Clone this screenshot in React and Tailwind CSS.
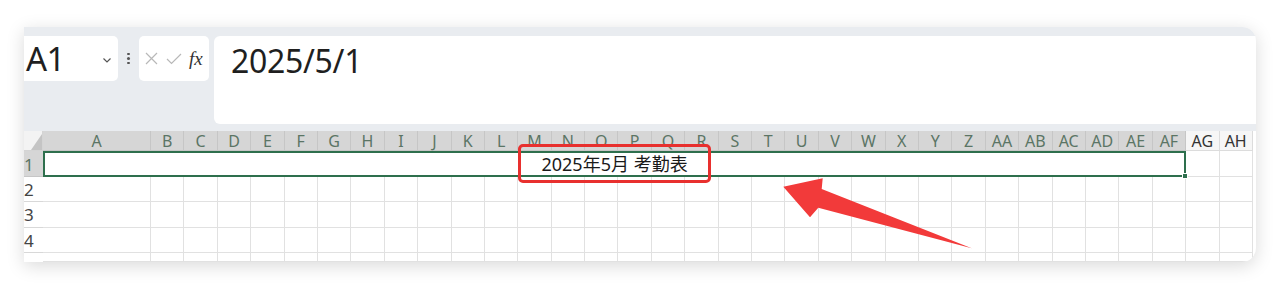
import React from "react";

const COLS = ["A","B","C","D","E","F","G","H","I","J","K","L","M","N","O","P","Q","R","S","T","U","V","W","X","Y","Z","AA","AB","AC","AD","AE","AF","AG","AH"];

export default function App() {
  return (
    <div className="relative w-[1280px] h-[286px] bg-white overflow-hidden" style={{ fontFamily: '"Noto Sans", "Noto Sans CJK SC", sans-serif' }}>
      <div className="pt-[27px] pl-[24px]">
        <div className="w-[1232px] h-[235px] bg-white rounded-r-[14px] shadow-[0_4px_18px_rgba(0,0,0,0.15)] overflow-hidden flex flex-col">
          {/* formula bar area */}
          <div className="h-[104px] shrink-0 bg-[#e9ecf0] pt-[9px] flex items-start">
            <div className="w-[94px] h-[45px] bg-white rounded-r-[5px] flex items-center justify-between pr-[5px]">
              <span className="text-[33px] leading-none text-[#1f1f1f] pl-[2px] tracking-[-0.5px]">A1</span>
              <svg width="12" height="12" viewBox="0 0 12 12" className="mt-[2px]"><path d="M2.5 4.5 L6 8 L9.5 4.5" fill="none" stroke="#555" strokeWidth="1.2" /></svg>
            </div>
            <div className="w-[21px] h-[45px] flex flex-col items-center justify-center gap-[2px]">
              <span className="w-[2.5px] h-[2.5px] rounded-full bg-[#555]" />
              <span className="w-[2.5px] h-[2.5px] rounded-full bg-[#555]" />
              <span className="w-[2.5px] h-[2.5px] rounded-full bg-[#555]" />
            </div>
            <div className="w-[70px] h-[45px] bg-white rounded-[5px] flex items-center pl-[6px] gap-[8px]">
              <svg width="13" height="13" viewBox="0 0 13 13"><path d="M1 1 L12 12 M12 1 L1 12" stroke="#b8b8b8" strokeWidth="1.2" /></svg>
              <svg width="16" height="12" viewBox="0 0 16 12"><path d="M1 6 L5.5 10.5 L15 1" fill="none" stroke="#b8b8b8" strokeWidth="1.2" /></svg>
              <span className="text-[19px] italic text-[#333] leading-none -ml-[1px]" style={{ fontFamily: '"Liberation Serif", serif' }}>fx</span>
            </div>
            <div className="ml-[5px] flex-1 h-[88px] bg-white rounded-l-[6px] pl-[17px] pt-[3px]">
              <span className="text-[32px] leading-[44px] text-[#1f1f1f] tracking-[-0.3px]">2025/5/1</span>
            </div>
          </div>
          {/* grid */}
          <div className="grid grid-cols-[19px_108px_repeat(33,33.4px)] grid-rows-[20px_26px_25px_26px_25px_9px]">
            {/* header row */}
            <div className="bg-[#f3f3f3] border-r border-b border-[#d4d4d4] flex items-end justify-end">
              <svg width="11" height="16" viewBox="0 0 11 16"><polygon points="11,0 11,16 0,16" fill="#c4c4c4" /></svg>
            </div>
            {COLS.map((c, i) => {
              const sel = i < 32;
              return (
                <div key={c} className={`${sel ? "bg-[#d6d6d6] text-[#5b7565]" : "bg-[#f6f6f6] text-[#333]"} border-r border-b ${sel ? "border-[#c6c6c6]" : "border-[#dcdcdc]"} flex items-center justify-center text-[16px] leading-none`}>
                  {c}
                </div>
              );
            })}
            {/* row 1 */}
            <div className="bg-[#d6d6d6] text-[#5b7565] text-[17px] leading-none flex items-center pt-[2px] border-b border-[#c6c6c6]">1</div>
            <div className="col-span-32 relative border-2 border-[#2e6f4d] bg-white flex items-center justify-center">
              <span className="text-[18px] text-[#1a1a1a] leading-none">2025年5月 考勤表</span>
              <span className="absolute -right-[4px] -bottom-[4px] w-[6px] h-[6px] bg-[#2e6f4d] border border-white" />
            </div>
            <div className="border-r border-b border-[#e1e1e1]" />
            <div className="border-r border-b border-[#e1e1e1]" />
            {/* rows 2-5 */}
            {[2, 3, 4, 5].map((r) => (
              <React.Fragment key={r}>
                <div className={`text-[17px] leading-none text-[#444] flex items-center ${r < 5 ? "border-b border-[#d8d8d8]" : ""}`}>{r < 5 ? r : ""}</div>
                {COLS.map((c) => (
                  <div key={c} className="border-r border-b border-[#e1e1e1]" />
                ))}
              </React.Fragment>
            ))}
          </div>
        </div>
      </div>
      {/* annotations */}
      <div className="absolute left-[518px] top-[144px] w-[193px] h-[39px] border-[3px] border-[#e8302e] rounded-[5px]" />
      <svg className="absolute left-0 top-0 pointer-events-none" width="1280" height="286">
        <polygon points="783.3,186.7 822.7,178.3 821.7,189 971.7,248.3 818.3,207.7 810,217.3" fill="#f23a3a" />
      </svg>
    </div>
  );
}
